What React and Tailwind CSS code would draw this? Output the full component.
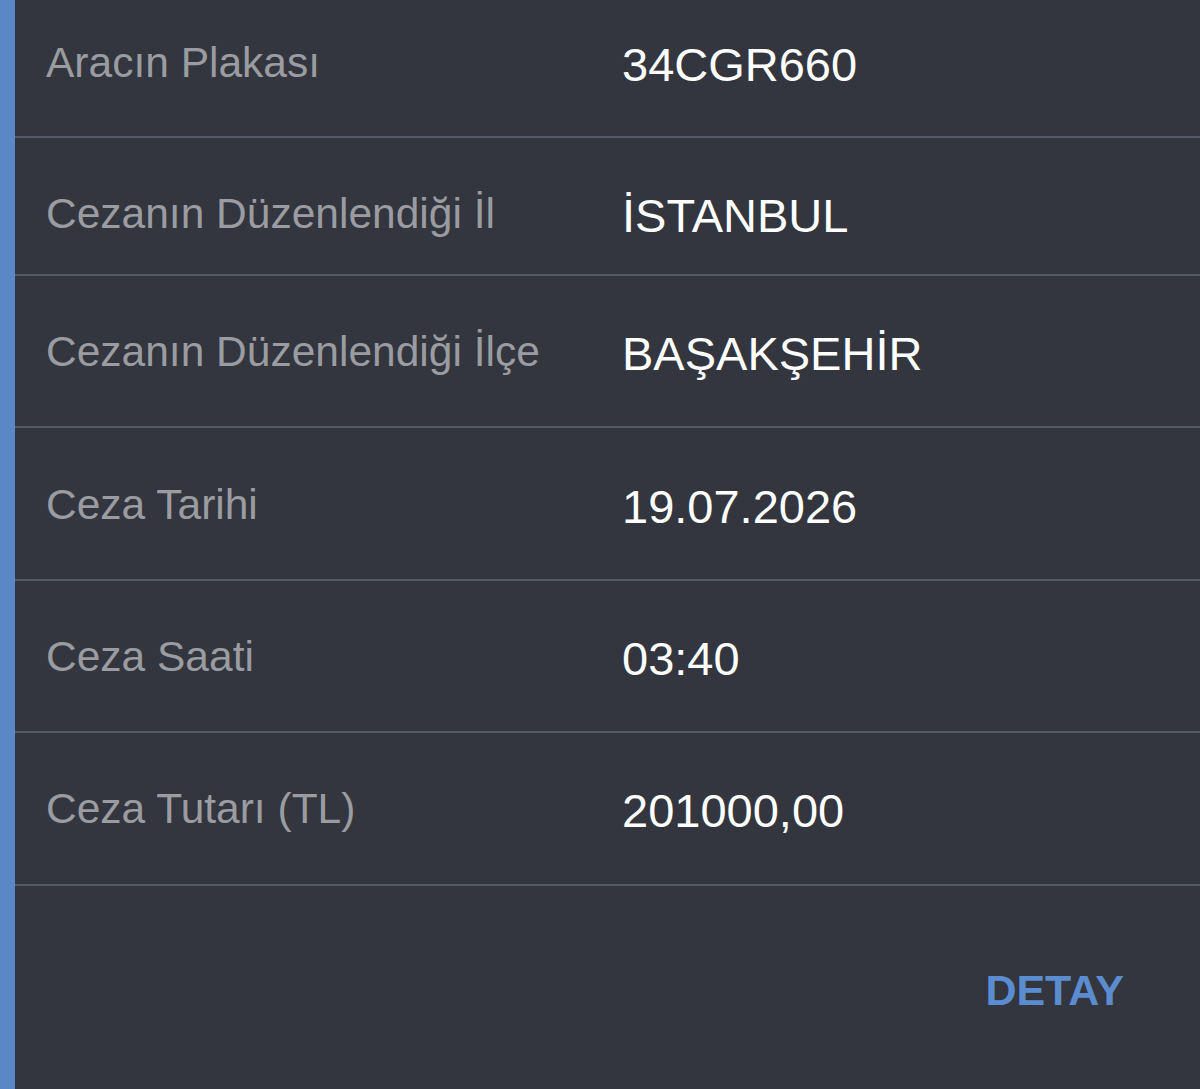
import React from 'react';

const rows = [
  { label: 'Aracın Plakası', value: '34CGR660', h: 'h-[138px]', pt: 'pt-[41px]' },
  { label: 'Cezanın Düzenlendiği İl', value: 'İSTANBUL', h: 'h-[138px]', pt: 'pt-[54px]' },
  { label: 'Cezanın Düzenlendiği İlçe', value: 'BAŞAKŞEHİR', h: 'h-[152px]', pt: 'pt-[54px]' },
  { label: 'Ceza Tarihi', value: '19.07.2026', h: 'h-[153px]', pt: 'pt-[55px]' },
  { label: 'Ceza Saati', value: '03:40', h: 'h-[152px]', pt: 'pt-[54px]' },
  { label: 'Ceza Tutarı (TL)', value: '201000,00', h: 'h-[153px]', pt: 'pt-[54px]' },
];

const App = () => {
  return (
    <div
      className="flex w-[1200px] h-[1089px] overflow-hidden bg-[#33363e]"
      style={{ fontFamily: '"Liberation Sans", Arial, sans-serif' }}
    >
      <div className="w-[15px] shrink-0 bg-[#5a87c6]" />
      <div className="flex-1 flex flex-col">
        {rows.map((row) => (
          <div
            key={row.label}
            className={`flex items-start border-b-2 border-[#565a66] ${row.h} ${row.pt}`}
          >
            <div className="w-[607px] pl-[31px] pt-[1px] text-[42.5px] leading-none text-[#9b9ca1] whitespace-nowrap">
              {row.label}
            </div>
            <div className="text-[47px] leading-none text-white whitespace-nowrap">
              {row.value}
            </div>
          </div>
        ))}
        <div className="flex-1 flex justify-end items-start pt-[83px] pr-[76px]">
          <span className="text-[43px] leading-none font-bold text-[#5b8ccf]">DETAY</span>
        </div>
      </div>
    </div>
  );
};

export default App;
